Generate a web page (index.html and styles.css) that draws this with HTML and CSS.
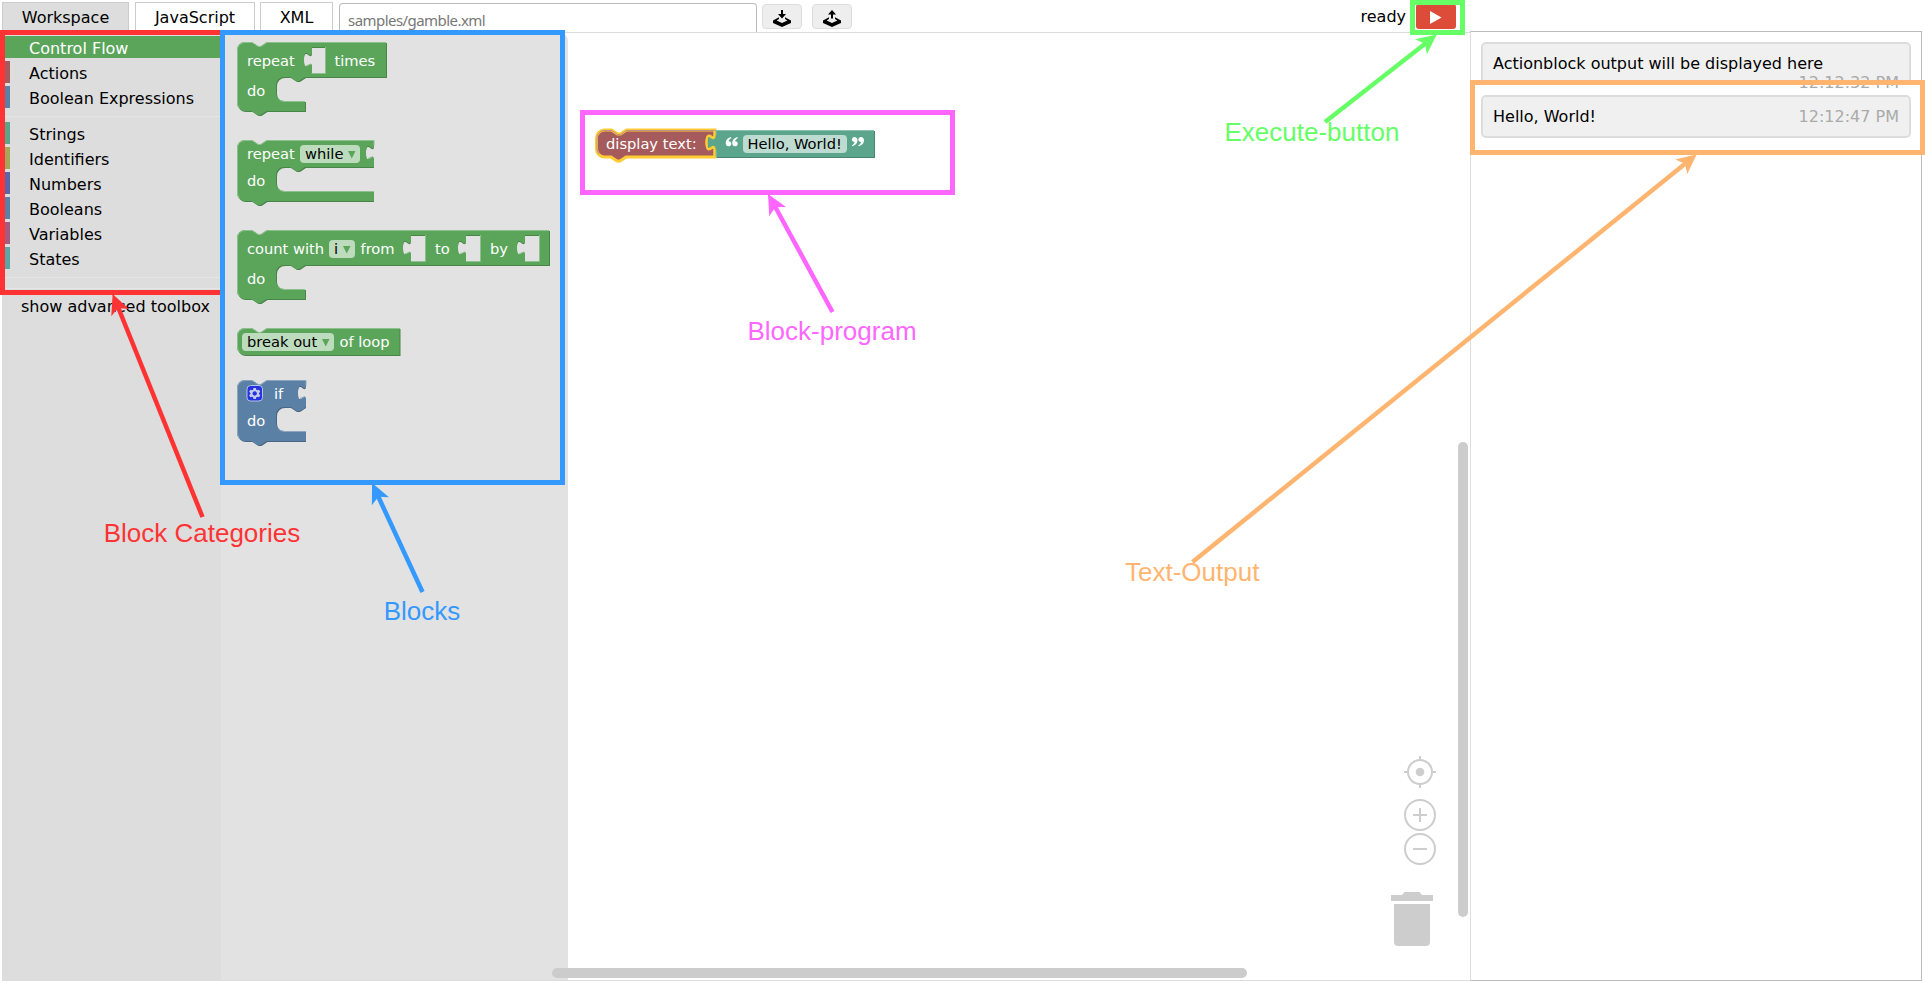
FILE: index.html
```html
<!DOCTYPE html>
<html lang="en">
<head>
<meta charset="utf-8">
<title>Workspace</title>
<link rel="stylesheet" href="styles.css">
</head>
<body>
<div class="app">
  <div class="main">
    <header class="bar">
      <div class="tab tab-active tab-ws">Workspace</div>
      <div class="tab tab-js">JavaScript</div>
      <div class="tab tab-xml">XML</div>
      <div class="path"><span>samples/gamble.xml</span></div>
      <div class="btn"><svg width="20" height="20" viewBox="0 0 20 20"><path d="M9 1h2v4h3L10 9.500 6 5h3z"/><path fill-rule="evenodd" d="M1 11.500 7 8.300v1.600L4.600 11.500 10 14l5.400-2.500L13 9.900V8.300l6 3.200V14l-9 4-9-4z"/></svg></div>
      <div class="btn btn-up"><svg width="20" height="20" viewBox="0 0 20 20"><path d="M9 9.500h2V5.500h3L10 1 6 5.500h3z"/><path fill-rule="evenodd" d="M1 11.500 7 8.300v1.600L4.600 11.500 10 14l5.400-2.500L13 9.900V8.300l6 3.200V14l-9 4-9-4z"/></svg></div>
      <div class="status">ready</div>
      <div class="run"><svg width="12" height="13" viewBox="0 0 12 13"><path d="M0 0 11.500 6.500 0 13z"/></svg></div>
    </header>
    <div class="blockly">
      <nav class="toolbox">
        <div class="cat selected">Control Flow</div>
        <div class="cat c-action">Actions</div>
        <div class="cat c-bool">Boolean Expressions</div>
        <div class="sep"></div>
        <div class="cat c-string">Strings</div>
        <div class="cat c-ident">Identifiers</div>
        <div class="cat c-num">Numbers</div>
        <div class="cat c-bool">Booleans</div>
        <div class="cat c-var">Variables</div>
        <div class="cat c-state">States</div>
        <div class="sep"></div>
        <div class="sep sep-last"></div>
        <div class="advanced">show advanced toolbox</div>
      </nav>
      <div class="flyout">
        <svg class="blocks" width="347" height="460" viewBox="221 33 347 460">
          <g class="green" transform="translate(237,42)">
            <path class="dark" transform="translate(1,1)" fill-rule="evenodd" d="M0 8A8 8 0 0 1 8 0H15l6 4h3l6-4H149V35H68l-6 4h-3l-6-4H47a8 8 0 0 0-8 8v8a8 8 0 0 0 8 8H68V69H29.500l-6 4h-3l-6-4H8a8 8 0 0 1-8-8zM88 5H74v5c0 10-8-8-8 7.500s8-2.500 8 7.500v6h14z"/>
            <path fill-rule="evenodd" d="M0 8A8 8 0 0 1 8 0H15l6 4h3l6-4H149V35H68l-6 4h-3l-6-4H47a8 8 0 0 0-8 8v8a8 8 0 0 0 8 8H68V69H29.500l-6 4h-3l-6-4H8a8 8 0 0 1-8-8zM89 5H75v5c0 10-8-8-8 7.500s8-2.500 8 7.500v6h14z"/>
            <path class="light" d="M2.700 66.300A7.500 7.500 0 0 1 .5 61V8A7.500 7.500 0 0 1 8 .5H15l6 4h3l6-4H149M41.300 56.800A8.500 8.500 0 0 0 47 59.500H68M88.500 5V31.500H74.500M69 24l5-2"/>
            <text x="10" y="24">repeat</text><text x="97.500" y="24">times</text><text x="10" y="54">do</text>
          </g>
          <g class="green" transform="translate(237,140)">
            <path class="dark" transform="translate(1,1)" d="M0 8A8 8 0 0 1 8 0H15l6 4h3l6-4H136v5c0 10-8-8-8 7.500s8-2.500 8 7.500v7H68l-6 4h-3l-6-4H47a8 8 0 0 0-8 8v8a8 8 0 0 0 8 8H136V61H29.500l-6 4h-3l-6-4H8a8 8 0 0 1-8-8z"/>
            <path d="M0 8A8 8 0 0 1 8 0H15l6 4h3l6-4H137v5c0 10-8-8-8 7.500s8-2.500 8 7.500v7H68l-6 4h-3l-6-4H47a8 8 0 0 0-8 8v8a8 8 0 0 0 8 8H137V61H29.500l-6 4h-3l-6-4H8a8 8 0 0 1-8-8z"/>
            <path class="light" d="M2.700 58.300A7.500 7.500 0 0 1 .5 53V8A7.500 7.500 0 0 1 8 .5H15l6 4h3l6-4H137v5M131 18.500l5-2M41.300 48.800A8.500 8.500 0 0 0 47 51.500H137"/>
            <rect class="field" x="63" y="5" width="60" height="18" rx="4"/>
            <text x="10" y="19">repeat</text><text class="ft" x="68" y="19">while</text><path class="arr" d="M111 11h7.500l-3.750 7.500z"/><text x="10" y="46">do</text>
          </g>
          <g class="green" transform="translate(237,230)">
            <path class="dark" transform="translate(1,1)" fill-rule="evenodd" d="M0 8A8 8 0 0 1 8 0H15l6 4h3l6-4H312V35H68l-6 4h-3l-6-4H47a8 8 0 0 0-8 8v8a8 8 0 0 0 8 8H68V69H29.500l-6 4h-3l-6-4H8a8 8 0 0 1-8-8zM188 5H173v5c0 10-8-8-8 7.500s8-2.500 8 7.500v6h15zM243 5H228v5c0 10-8-8-8 7.500s8-2.500 8 7.500v6h15zM302 5H287v5c0 10-8-8-8 7.500s8-2.500 8 7.500v6h15z"/>
            <path fill-rule="evenodd" d="M0 8A8 8 0 0 1 8 0H15l6 4h3l6-4H312V35H68l-6 4h-3l-6-4H47a8 8 0 0 0-8 8v8a8 8 0 0 0 8 8H68V69H29.500l-6 4h-3l-6-4H8a8 8 0 0 1-8-8zM189 5H174v5c0 10-8-8-8 7.500s8-2.500 8 7.500v6h15zM244 5H229v5c0 10-8-8-8 7.500s8-2.500 8 7.500v6h15zM303 5H288v5c0 10-8-8-8 7.500s8-2.500 8 7.500v6h15z"/>
            <path class="light" d="M2.700 66.300A7.500 7.500 0 0 1 .5 61V8A7.500 7.500 0 0 1 8 .5H15l6 4h3l6-4H312M41.300 56.800A8.500 8.500 0 0 0 47 59.500H68M188.500 5V31.500H174M168 24l5-2M243.500 5V31.500H229M223 24l5-2M302.500 5V31.500H288M282 24l5-2"/>
            <rect class="field" x="92" y="10" width="26" height="18" rx="4"/>
            <text x="10" y="24">count with</text><text class="ft" x="97" y="24">i</text><path class="arr" d="M106 16h7.500l-3.750 7.500z"/><text x="123.500" y="24">from</text><text x="198" y="24">to</text><text x="253" y="24">by</text><text x="10" y="54">do</text>
          </g>
          <g class="green" transform="translate(237,328)">
            <path class="dark" transform="translate(1,1)" d="M0 8A8 8 0 0 1 8 0H15l6 4h3l6-4H162.500V27H8a8 8 0 0 1-8-8z"/>
            <path d="M0 8A8 8 0 0 1 8 0H15l6 4h3l6-4H162.500V27H8a8 8 0 0 1-8-8z"/>
            <path class="light" d="M2.700 24.300A7.500 7.500 0 0 1 .5 19V8A7.500 7.500 0 0 1 8 .5H15l6 4h3l6-4H162.500"/>
            <rect class="field" x="5" y="5" width="92" height="18" rx="4"/>
            <text class="ft" x="10" y="19">break out</text><path class="arr" d="M85 11h7.500l-3.750 7.500z"/><text x="102.500" y="19">of loop</text>
          </g>
          <g class="blue" transform="translate(237,380)">
            <path class="dark" transform="translate(1,1)" d="M0 8A8 8 0 0 1 8 0H15l6 4h3l6-4H68v5c0 10-8-8-8 7.500s8-2.500 8 7.500v7l-6 4h-3l-6-4H47a8 8 0 0 0-8 8v8a8 8 0 0 0 8 8H68V61H29.500l-6 4h-3l-6-4H8a8 8 0 0 1-8-8z"/>
            <path d="M0 8A8 8 0 0 1 8 0H15l6 4h3l6-4H69v5c0 10-8-8-8 7.500s8-2.500 8 7.500v7l-6 4h-3l-6-4H47a8 8 0 0 0-8 8v8a8 8 0 0 0 8 8H69V61H29.500l-6 4h-3l-6-4H8a8 8 0 0 1-8-8z"/>
            <path class="light" d="M2.700 58.300A7.500 7.500 0 0 1 .5 53V8A7.500 7.500 0 0 1 8 .5H15l6 4h3l6-4H69v5M63 18.500l5-2M41.300 48.800A8.500 8.500 0 0 0 47 51.500H69"/>
            <rect class="gearbox" x="10" y="5.500" width="15.500" height="15.500" rx="3.500"/>
            <path class="gear" transform="translate(-.5,0)" fill-rule="evenodd" d="M17 8h2.400l.4 1.700 1.100.6 1.700-.5 1.200 2-1.300 1.200v1l1.300 1.200-1.200 2-1.700-.5-1.100.6-.4 1.700H17l-.4-1.700-1.100-.6-1.700.5-1.200-2 1.300-1.200v-1l-1.300-1.200 1.200-2 1.700.5 1.100-.6zM18.200 11.300a2.200 2.200 0 1 0 .01 0z"/>
            <text x="37" y="19">if</text><text x="10" y="46">do</text>
          </g>
        </svg>
      </div>
      <svg class="canvas" width="902" height="947" viewBox="568 33 902 947">
        <g transform="translate(596.500,130)">
          <path class="sel" d="M0 8A8 8 0 0 1 8 0H15l6 4h3l6-4H118.500v5c0 10-8-8-8 7.500s8-2.500 8 7.500v7H29.500l-6 4h-3l-6-4H8a8 8 0 0 1-8-8z"/>
          <path class="light red-light" d="M2.700 24.300A7.500 7.500 0 0 1 .5 19V8A7.500 7.500 0 0 1 8 .5H15l6 4h3l6-4H118"/>
          <text x="9.500" y="19">display text:</text>
        </g>
        <g class="teal" transform="translate(715.500,130)">
          <path class="dark" transform="translate(1,1)" d="M0 0H158.500V27H0z"/>
          <path d="M0 0H158.500V27H0V20c0-10-8 8-8-7.500s8 2.500 8-7.500z"/>
          <path class="light" d="M.5 5V.5H158.500M.5 27V20.500"/>
          <path class="yel" d="M-1 1V5c0 10-8-8-8 7.500s8-2.500 8 7.500v7"/>
          <path class="q" d="M15.500 7C12 8 10.200 10.200 10.200 13c0 2 1.200 3.300 2.900 3.300 1.600 0 2.700-1.100 2.700-2.600s-1.100-2.500-2.700-2.400c.2-1.400 1.200-2.500 2.800-3.300zM22 7c-3.500 1-5.300 3.200-5.300 6 0 2 1.200 3.300 2.900 3.300 1.600 0 2.700-1.100 2.700-2.600s-1.100-2.500-2.700-2.400c.2-1.400 1.200-2.500 2.800-3.300z"/>
          <path class="q" d="M136.700 16.300c3.500-1 5.300-3.200 5.300-6 0-2-1.200-3.300-2.900-3.300-1.600 0-2.700 1.100-2.700 2.600s1.100 2.500 2.700 2.400c-.2 1.400-1.200 2.500-2.800 3.300zM143.200 16.300c3.500-1 5.300-3.200 5.300-6 0-2-1.200-3.300-2.900-3.300-1.600 0-2.700 1.100-2.700 2.600s1.100 2.500 2.700 2.400c-.2 1.400-1.200 2.500-2.800 3.300z"/>
          <rect class="field" x="27.500" y="5" width="104" height="18" rx="4"/>
          <text class="ft" x="32" y="19">Hello, World!</text>
        </g>
        <g class="ctl">
          <circle cx="1420" cy="772" r="12"/><circle class="dot" cx="1420" cy="772" r="4.300"/>
          <path d="M1420 756v4M1420 784v4M1404 772h4M1432 772h4"/>
          <circle cx="1420" cy="815" r="15"/><path d="M1413 815h14M1420 808v14"/>
          <circle cx="1420" cy="849" r="15"/><path d="M1413 849h14"/>
          <path class="dot" d="M1391 895h11l2.500-3h15l2.500 3h11v6h-42zM1394 904h36v38a4 4 0 0 1-4 4h-28a4 4 0 0 1-4-4z"/>
        </g>
      </svg>
      <div class="vscroll"></div>
      <div class="hscroll"></div>
    </div>
  </div>
  <aside class="output">
    <div class="msg"><span>Actionblock output will be displayed here</span><time class="wrapped">12:12:32 PM</time></div>
    <div class="msg"><span>Hello, World!</span><time>12:12:47 PM</time></div>
  </aside>
</div>
<svg class="notes" width="1925" height="982" viewBox="0 0 1925 982">
  <defs>
    <marker id="m" viewBox="0 0 20 20" refX="19" refY="10" markerWidth="20" markerHeight="20" markerUnits="userSpaceOnUse" orient="auto"><path fill="context-stroke" stroke="none" d="M20 10 0 0.500 5 10 0 19.500z"/></marker>
  </defs>
  <g class="n-red"><path d="M220 32.500H2.500V292.500H220"/><path class="shaft" d="M202.500 517 118 307"/><path class="head" marker-end="url(#m)" d="M202.500 517 113 295"/><text x="103.700" y="541.500">Block Categories</text></g>
  <g class="n-blue"><path d="M222.500 32.500H562.500V482.500H222.500z"/><path class="shaft" d="M422.500 592 378 496"/><path class="head" marker-end="url(#m)" d="M422.500 592 372.500 484"/><text x="383.700" y="619.500">Blocks</text></g>
  <g class="n-pink"><path d="M582.500 112.500H952.500V192.500H582.500z"/><path class="shaft" d="M832.500 312 775 206.500"/><path class="head" marker-end="url(#m)" d="M832.500 312 768.500 195"/><text x="747.500" y="339.500">Block-program</text></g>
  <g class="n-green"><path d="M1412.500 2.500H1462.500V32.500H1412.500z"/><path class="shaft" d="M1325 122 1426 43"/><path class="head" marker-end="url(#m)" d="M1325 122 1436 35"/><text x="1224.500" y="141">Execute-button</text></g>
  <g class="n-orange"><path d="M1472.500 82.500H1922.500V152.500H1472.500z"/><path class="shaft" d="M1192.500 562 1686 163"/><path class="head" marker-end="url(#m)" d="M1192.500 562 1696 155"/><text x="1125" y="581">Text-Output</text></g>
</svg>
</body>
</html>
```

FILE: styles.css
```css
* { box-sizing: border-box; }
body { margin: 0; background: #fff; color: #000; font: 16px/22px "DejaVu Sans", sans-serif; overflow: hidden; }
.app { display: flex; width: 1925px; height: 982px; position: relative; }
.main { width: 1470px; display: flex; flex-direction: column; padding-left: 2px; }
.bar { height: 32px; display: flex; align-items: flex-start; flex: none; }
.tab { border: 1px solid #ccc; border-bottom: 0; height: 30px; margin-top: 2px; text-align: center; line-height: 30px; }
.tab-active { background: #ddd; }
.tab-ws { width: 127px; }
.tab-js { width: 120px; margin-left: 6px; }
.tab-xml { width: 73px; margin-left: 5px; }
.path { width: 418px; height: 29px; margin: 3px 0 0 6px; border: 1px solid #bbb; border-bottom: 0; border-radius: 4px 4px 0 0; padding: 5px 0 0 8px; color: #777; font-family: "Noto Sans", sans-serif; font-size: 15px; letter-spacing: -.55px; }
.btn { width: 40px; height: 25px; margin: 4px 0 0 5px; border: 1px solid #ddd; border-radius: 4px; background: #eee; display: flex; justify-content: center; padding-top: 4px; }
.btn-up { margin-left: 10px; }
.status { margin: 6px 10px 0 auto; }
.run { width: 40px; height: 25px; margin: 4px 14px 0 0; background: #dd4b39; border-radius: 3px; display: flex; align-items: center; justify-content: center; padding-top: 2px; }
.run path { fill: #fff; }
.blockly { height: 949px; display: flex; position: relative; border-top: 1px solid #ddd; border-bottom: 1px solid #ddd; }
.toolbox { width: 219px; background: #ddd; padding-top: 3px; flex: none; }
.cat { height: 22px; margin-bottom: 3px; border-left: 8px solid #5ba55b; padding-left: 19px; line-height: 25px; white-space: nowrap; }
.selected { background: #5ba55b; color: #fff; }
.c-action { border-color: #a55b5b; }
.c-bool { border-color: #5b80a5; }
.c-string { border-color: #5ba58c; }
.c-ident { border-color: #a5a55b; }
.c-num { border-color: #5b67a5; }
.c-var { border-color: #a55b80; }
.c-state { border-color: #5ba5a5; }
.sep { height: 1px; background: #e5e5e5; margin: 8px 0 5px; }
.sep-last { margin-top: 10px; }
.advanced { padding: 2px 0 0 19px; white-space: nowrap; }
.flyout { width: 347px; background: #e2e2e2; border-radius: 0 8px 0 0; flex: none; }
.blocks, .canvas { display: block; flex: none; }
.blocks text, .canvas text { font-size: 14.67px; fill: #fff; }
.blocks .ft, .canvas .ft { fill: #000; }
.green { fill: #5ba55b; }
.green .dark { fill: #498449; }
.green .light { stroke: #8cc08c; }
.blue { fill: #5b80a5; }
.blue .dark { fill: #496684; }
.blue .light { stroke: #8ca6c0; }
.teal { fill: #5ba58c; }
.teal .dark { fill: #498470; }
.teal .light { stroke: #8cc0ae; }
.light { fill: none; stroke-width: 1; }
.green .arr { fill: #5ba55b; }
.field { fill: #fff; fill-opacity: .6; }
.gearbox { fill: #2433dd; stroke: #b5c4e8; stroke-width: 1; }
.gear { fill: #c5cdea; }
.sel { fill: #a55b5b; stroke: #fc3; stroke-width: 3; }
.red-light { stroke: #c08c8c; }
.teal .yel { fill: none; stroke: #fc3; stroke-width: 2; }
.teal .q { fill: #fff; }
.ctl { fill: none; stroke: #cdcdcd; stroke-width: 2; }
.ctl .dot { fill: #cdcdcd; stroke: none; }
.vscroll, .hscroll { position: absolute; background: #ccc; border-radius: 5px; }
.vscroll { left: 1456px; top: 409px; width: 10px; height: 475px; }
.hscroll { left: 550px; top: 935px; width: 695px; height: 10px; }
.output { width: 452px; height: 950px; margin-top: 31px; border: 1px solid #bbb; border-left-color: #ddd; padding: 10px 10px 0; }
.msg { height: 43px; border: 2px solid #ddd; border-radius: 5px; background: #f0f0f0; padding: 9px 10px; margin-bottom: 10px; display: flex; justify-content: space-between; white-space: nowrap; }
.msg time { color: #aaa; }
.msg .wrapped { margin: 19px 0 0 -40px; }
.notes { position: absolute; left: 0; top: 0; fill: none; stroke-width: 5; }
.notes .head { stroke-width: 1; }
.notes .shaft { stroke-width: 4.5; }
.notes text { font: 26px "Liberation Sans", Arial, sans-serif; stroke: none; }
.n-red { stroke: #f33; }
.n-red text { fill: #f33; }
.n-blue { stroke: #39f; }
.n-blue text { fill: #39f; }
.n-pink { stroke: #f6f; }
.n-pink text { fill: #f6f; }
.n-green { stroke: #6f6; }
.n-green text { fill: #6f6; }
.n-orange { stroke: #ffb570; }
.n-orange text { fill: #ffb570; }
```
